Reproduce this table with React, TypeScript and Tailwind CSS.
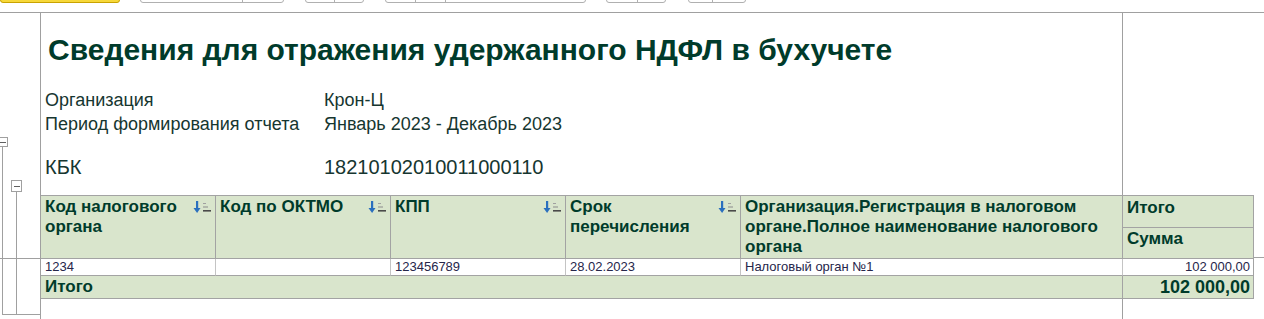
import React from 'react'

function SortIcon() {
  return (
    <svg width="20" height="13" viewBox="0 0 20 13" className="shrink-0 mt-[4px]">
      <rect x="3" y="0" width="2.2" height="8" fill="#2a6fbe" />
      <polygon points="0.5,7 7.5,7 4.1,12" fill="#2a6fbe" />
      <rect x="10" y="2" width="3" height="1" fill="#a0a0a0" />
      <rect x="10" y="5.5" width="5" height="1" fill="#8c8c8c" />
      <rect x="10" y="9" width="8" height="1.6" fill="#4a4a4a" />
    </svg>
  )
}

function Gutter() {
  return (
    <div className="w-[41px] shrink-0 border-r border-[#a0a0a0]">
      <svg width="40" height="306" viewBox="0 0 40 306">
        <g stroke="#a0a0a0" strokeWidth="1" fill="none" shapeRendering="crispEdges">
          <rect x="-2.5" y="124.5" width="10" height="9" fill="#fff" />
          <line x1="0" y1="129.5" x2="6" y2="129.5" stroke="#606060" />
          <line x1="2.5" y1="133.5" x2="2.5" y2="301.5" />
          <rect x="11.5" y="167.5" width="10" height="11" fill="#fff" />
          <line x1="13.5" y1="173.5" x2="19.5" y2="173.5" stroke="#606060" />
          <line x1="16.5" y1="178.5" x2="16.5" y2="301.5" />
          <line x1="0" y1="245.5" x2="40" y2="245.5" />
          <line x1="2.5" y1="301.5" x2="40" y2="301.5" />
        </g>
      </svg>
    </div>
  )
}

function Toolbar() {
  return (
    <div className="h-[13px] border-b border-[#a0a0a0] flex items-start overflow-hidden">
      <div className="-mt-[20px] h-[23px] w-[120px] bg-[#f7d83a] border border-[#c9a300] rounded-b-[3px]" />
      <div className="ml-[20px] -mt-[20px] h-[23px] w-[144px] border border-[#b0b0b0] rounded-b-[3px] flex">
        <div className="w-[102px] border-r border-[#b0b0b0]" />
      </div>
      <div className="ml-[21px] -mt-[20px] h-[23px] w-[59px] border border-[#b0b0b0] rounded-b-[3px] flex">
        <div className="w-[29px] border-r border-[#b0b0b0]" />
      </div>
      <div className="ml-[21px] -mt-[20px] h-[23px] w-[201px] border border-[#b0b0b0] rounded-b-[3px] flex">
        <div className="w-[30px] border-r border-[#b0b0b0]" />
        <div className="w-[30px] border-r border-[#b0b0b0]" />
      </div>
      <div className="ml-[20px] -mt-[20px] h-[23px] w-[60px] border border-[#b0b0b0] rounded-b-[3px] flex">
        <div className="w-[31px] border-r border-[#b0b0b0]" />
      </div>
      <div className="ml-[22px] -mt-[20px] h-[23px] w-[58px] border border-[#b0b0b0] rounded-b-[3px] flex">
        <div className="w-[24px] border-r border-[#b0b0b0]" />
      </div>
    </div>
  )
}

const hcell = 'h-[63px] border-r border-b border-[#a3a3a3] bg-[#d9e5cc] pl-[4px] pr-[2px] pt-[1px] flex justify-between items-start text-[17px] leading-[20px] font-bold text-[#003b2b]'
const dcell = 'h-[17px] border-r border-b border-[#c4c4c4] border-b-[#a3a3a3] pl-[4px] pr-[3px] text-[13px] leading-[16px] text-[#26264a] whitespace-nowrap overflow-hidden'

function Report() {
  return (
    <div className="flex">
      <div className="w-[1213px] shrink-0 border-t border-[#a3a3a3] grid grid-cols-[175px_175px_175px_175px_382px_131px]">
        <div className={hcell}>
          <span>Код налогового<br />органа</span>
          <SortIcon />
        </div>
        <div className={hcell}>
          <span>Код по ОКТМО</span>
          <SortIcon />
        </div>
        <div className={hcell}>
          <span>КПП</span>
          <SortIcon />
        </div>
        <div className={hcell}>
          <span>Срок<br />перечисления</span>
          <SortIcon />
        </div>
        <div className={hcell}>
          <span>Организация.Регистрация в налоговом органе.Полное наименование налогового органа</span>
        </div>
        <div className="h-[63px] flex flex-col text-[17px] leading-[20px] font-bold text-[#003b2b] bg-[#d9e5cc]">
          <div className="h-[32px] border-r border-b border-[#a3a3a3] pl-[4px] pt-[2px]">Итого</div>
          <div className="h-[31px] border-r border-b border-[#a3a3a3] pl-[4px] pt-[1px]">Сумма</div>
        </div>

        <div className={dcell}>1234</div>
        <div className={dcell}></div>
        <div className={dcell}>123456789</div>
        <div className={dcell}>28.02.2023</div>
        <div className={dcell}>Налоговый орган №1</div>
        <div className={dcell + ' text-right border-r-[#a3a3a3]'}>102 000,00</div>

        <div className="col-span-5 h-[23px] border-r border-b border-[#a3a3a3] bg-[#d9e5cc] pl-[4px] pt-[1px] text-[17px] leading-[20px] font-bold text-[#003b2b]">
          Итого
        </div>
        <div className="h-[23px] border-r border-b border-[#a3a3a3] bg-[#d9e5cc] pr-[3px] pt-[1px] text-right text-[18px] leading-[20px] font-bold text-[#003b2b]">
          102 000,00
        </div>
      </div>
      <div className="flex-1">
        <div className="h-[63px] border-b border-[#a3a3a3]" />
      </div>
    </div>
  )
}

export default function App() {
  return (
    <div className="w-[1264px] h-[319px] overflow-hidden bg-white font-['Liberation_Sans',Arial,sans-serif]">
      <Toolbar />
      <div className="flex h-[306px]">
        <Gutter />
        <div className="flex-1 flex flex-col">
          <div className="flex h-[182px]">
            <div className="w-[1082px] shrink-0 border-r border-[#a0a0a0]">
              <h1 className="mt-[22px] pl-[7px] text-[30px] leading-[30px] font-bold text-[#003b2b]">
                Сведения для отражения удержанного НДФЛ в бухучете
              </h1>
              <div className="mt-[23px] text-[18px] leading-[24px] text-[#163630]">
                <div className="flex">
                  <div className="w-[283px] pl-[4px]">Организация</div>
                  <div>Крон-Ц</div>
                </div>
                <div className="flex">
                  <div className="w-[283px] pl-[4px]">Период формирования отчета</div>
                  <div>Январь 2023 - Декабрь 2023</div>
                </div>
                <div className="flex mt-[19px] text-[20px]">
                  <div className="w-[283px] pl-[4px]">КБК</div>
                  <div>18210102010011000110</div>
                </div>
              </div>
            </div>
            <div className="flex-1" />
          </div>
          <Report />
          <div className="flex flex-1">
            <div className="w-[1082px] shrink-0 border-r border-[#a0a0a0]" />
            <div className="flex-1" />
          </div>
        </div>
      </div>
    </div>
  )
}
